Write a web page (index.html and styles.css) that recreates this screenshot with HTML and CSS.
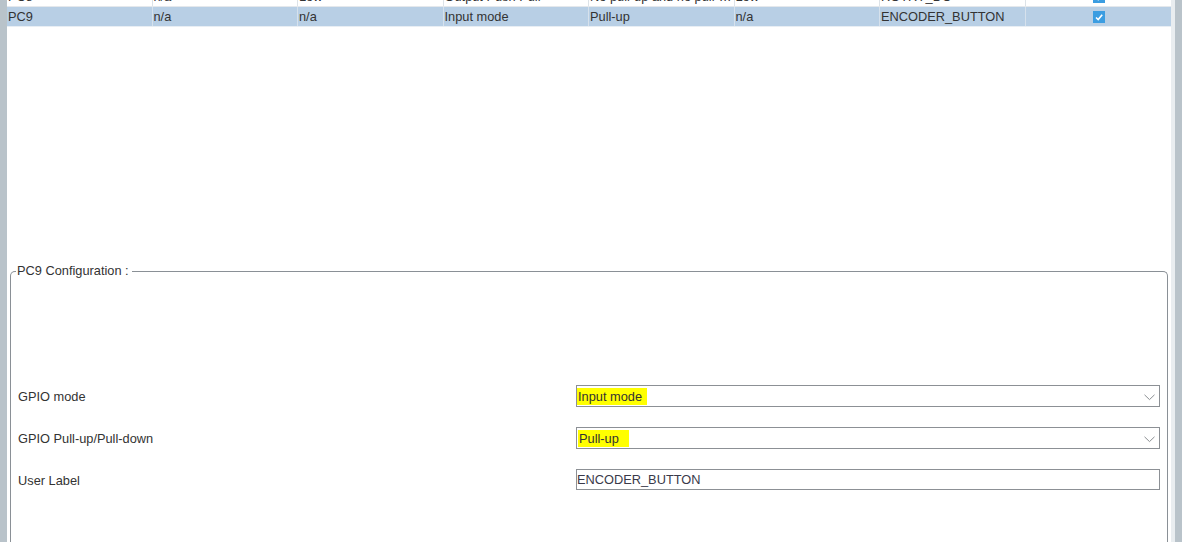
FILE: index.html
```html
<!DOCTYPE html>
<html>
<head>
<meta charset="utf-8">
<link rel="stylesheet" href="styles.css">
</head>
<body>
<div class="app">
  <div class="lstrip"></div>
  <div class="main">
    <div class="table">
      <div class="row partial">
        <div class="cell">PC8</div>
        <div class="cell">n/a</div>
        <div class="cell">Low</div>
        <div class="cell">Output Push Pull</div>
        <div class="cell">No pull-up and no pull-down</div>
        <div class="cell">Low</div>
        <div class="cell">ROTRY_DC</div>
        <div class="cell center"><span class="chk"><svg width="12" height="12" viewBox="0 0 12 12"><polyline points="3,6.5 5.2,8.6 9.2,3.8" fill="none" stroke="#fff" stroke-width="1.6"/></svg></span></div>
      </div>
      <div class="row selected">
        <div class="cell">PC9</div>
        <div class="cell">n/a</div>
        <div class="cell">n/a</div>
        <div class="cell">Input mode</div>
        <div class="cell">Pull-up</div>
        <div class="cell">n/a</div>
        <div class="cell">ENCODER_BUTTON</div>
        <div class="cell center"><span class="chk"><svg width="12" height="12" viewBox="0 0 12 12"><polyline points="3,6.5 5.2,8.6 9.2,3.8" fill="none" stroke="#fff" stroke-width="1.6"/></svg></span></div>
      </div>
    </div>
    <fieldset class="config">
      <legend>PC9 Configuration :</legend>
      <div class="form">
        <div class="frow">
          <div class="label">GPIO mode</div>
          <div class="box select"><span class="hl hl1">Input mode</span><svg class="chev" width="11" height="7" viewBox="0 0 11 7"><polyline points="0.5,0.8 5.5,5.6 10.5,0.8" fill="none" stroke="#8a8e92" stroke-width="1"/></svg></div>
        </div>
        <div class="frow">
          <div class="label">GPIO Pull-up/Pull-down</div>
          <div class="box select"><span class="hl hl2">Pull-up</span><svg class="chev" width="11" height="7" viewBox="0 0 11 7"><polyline points="0.5,0.8 5.5,5.6 10.5,0.8" fill="none" stroke="#8a8e92" stroke-width="1"/></svg></div>
        </div>
        <div class="frow">
          <div class="label">User Label</div>
          <div class="box input">ENCODER_BUTTON</div>
        </div>
      </div>
    </fieldset>
  </div>
  <div class="rlight"></div>
  <div class="scroll"></div>
  <div class="redge"></div>
</div>
</body>
</html>
```
FILE: styles.css
```css
html, body {
  margin: 0;
  padding: 0;
  background: #ffffff;
  overflow: hidden;
}
body {
  font-family: "Liberation Sans", Arial, sans-serif;
  font-size: 12.8px;
  color: #333333;
}
.app {
  display: flex;
  width: 1186px;
  height: 542px;
  overflow: hidden;
}
.lstrip {
  width: 7px;
  flex: none;
  background: #b9c3ca;
}
.main {
  width: 1164px;
  flex: none;
  display: flex;
  flex-direction: column;
  background: #fff;
}
.rlight {
  width: 4px;
  flex: none;
  background: #e9edf0;
}
.scroll {
  width: 7px;
  flex: none;
  background: #b9c3ca;
}
.redge {
  flex: 1;
  background: #fff;
}
.table {
  margin-top: -13px;
}
.row {
  display: grid;
  grid-template-columns: repeat(8, 1fr);
  height: 20px;
  box-sizing: border-box;
  border-bottom: 1px solid #e4e8ec;
}
.row.selected {
  background: #b8cfe5;
  border-bottom: 1px solid #e8eef4;
}
.cell {
  box-sizing: border-box;
  border-right: 1px solid #dde3e8;
  padding-left: 1px;
  line-height: 19px;
  white-space: nowrap;
  overflow: hidden;
  text-overflow: ellipsis;
}
.selected .cell {
  border-right-color: #d6e1ec;
}
.cell:last-child {
  border-right: none;
}
.cell.center {
  display: flex;
  justify-content: center;
  align-items: center;
}
.chk {
  width: 12px;
  height: 12px;
  background: #3b9de1;
  display: block;
}
.chk svg {
  display: block;
}
.config {
  margin: 237px 3px 0 3px;
  padding: 0 7px 0 7px;
  border: 1px solid #8a9096;
  border-bottom: none;
  border-radius: 5px 5px 0 0;
  flex: 1;
  min-width: 0;
}
.config legend {
  padding: 0 3px 0 1px;
  margin-left: -2px;
  font-size: 12.8px;
  line-height: 14px;
  color: #333;
}
.form {
  padding-top: 107px;
  display: flex;
  flex-direction: column;
  gap: 20px;
}
.frow {
  display: grid;
  grid-template-columns: 558px 1fr;
  align-items: center;
  height: 22px;
}
.label {
  color: #333;
  padding-top: 1px;
}
.box {
  box-sizing: border-box;
  height: 22px;
  border: 1px solid #8c9095;
  background: #fff;
  display: flex;
  align-items: center;
  position: relative;
}
.box.input {
  height: 21px;
  align-self: start;
  padding-left: 0;
  color: #3a3a4a;
}
.hl {
  background: #ffff00;
  height: 17px;
  line-height: 17px;
  display: block;
  color: #333;
  padding-left: 1px;
}
.hl1 { width: 69px; }
.hl2 { width: 50px; margin-left: 1px; }
.chev {
  position: absolute;
  right: 4px;
  top: 8px;
}
```
